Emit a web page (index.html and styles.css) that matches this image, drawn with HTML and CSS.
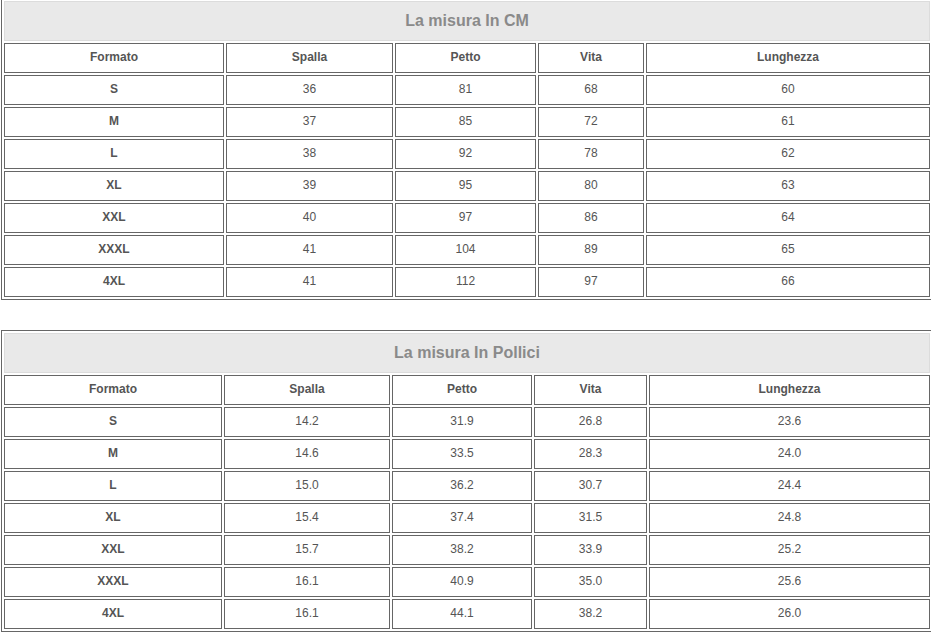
FILE: index.html
```html
<!DOCTYPE html>
<html lang="it">
<head>
<meta charset="utf-8">
<title>Tabella misure</title>
<link rel="stylesheet" href="styles.css">
</head>
<body>
<div class="page">
  <div class="chart chart-cm">
    <div class="title">La misura In CM</div>
    <div class="cell head">Formato</div><div class="cell head">Spalla</div><div class="cell head">Petto</div><div class="cell head">Vita</div><div class="cell head">Lunghezza</div>
    <div class="cell size">S</div><div class="cell">36</div><div class="cell">81</div><div class="cell">68</div><div class="cell">60</div>
    <div class="cell size">M</div><div class="cell">37</div><div class="cell">85</div><div class="cell">72</div><div class="cell">61</div>
    <div class="cell size">L</div><div class="cell">38</div><div class="cell">92</div><div class="cell">78</div><div class="cell">62</div>
    <div class="cell size">XL</div><div class="cell">39</div><div class="cell">95</div><div class="cell">80</div><div class="cell">63</div>
    <div class="cell size">XXL</div><div class="cell">40</div><div class="cell">97</div><div class="cell">86</div><div class="cell">64</div>
    <div class="cell size">XXXL</div><div class="cell">41</div><div class="cell">104</div><div class="cell">89</div><div class="cell">65</div>
    <div class="cell size">4XL</div><div class="cell">41</div><div class="cell">112</div><div class="cell">97</div><div class="cell">66</div>
  </div>
  <div class="chart chart-in">
    <div class="title">La misura In Pollici</div>
    <div class="cell head">Formato</div><div class="cell head">Spalla</div><div class="cell head">Petto</div><div class="cell head">Vita</div><div class="cell head">Lunghezza</div>
    <div class="cell size">S</div><div class="cell">14.2</div><div class="cell">31.9</div><div class="cell">26.8</div><div class="cell">23.6</div>
    <div class="cell size">M</div><div class="cell">14.6</div><div class="cell">33.5</div><div class="cell">28.3</div><div class="cell">24.0</div>
    <div class="cell size">L</div><div class="cell">15.0</div><div class="cell">36.2</div><div class="cell">30.7</div><div class="cell">24.4</div>
    <div class="cell size">XL</div><div class="cell">15.4</div><div class="cell">37.4</div><div class="cell">31.5</div><div class="cell">24.8</div>
    <div class="cell size">XXL</div><div class="cell">15.7</div><div class="cell">38.2</div><div class="cell">33.9</div><div class="cell">25.2</div>
    <div class="cell size">XXXL</div><div class="cell">16.1</div><div class="cell">40.9</div><div class="cell">35.0</div><div class="cell">25.6</div>
    <div class="cell size">4XL</div><div class="cell">16.1</div><div class="cell">44.1</div><div class="cell">38.2</div><div class="cell">26.0</div>
  </div>
</div>
</body>
</html>
```
FILE: styles.css
```css
html, body {
  margin: 0;
  padding: 0;
  background: #fff;
}
body {
  overflow: hidden;
  font-family: "Liberation Sans", Arial, sans-serif;
  color: #555;
}
.page {
  display: flex;
  flex-direction: column;
  gap: 30px;
  margin-top: -2px;
  margin-left: 1px;
}
.chart {
  display: grid;
  gap: 2px;
  padding: 2px;
  border: 1px solid #666;
  width: max-content;
  grid-template-rows: 40px;
  grid-auto-rows: 30px;
}
.chart-cm {
  grid-template-columns: 220px 167px 141px 106px 284px;
}
.chart-in {
  grid-template-columns: 218px 166px 140px 113px 281px;
}
.title {
  grid-column: 1 / -1;
  box-sizing: border-box;
  background: #e9e9e9;
  border: 1px solid #dcdcdc;
  display: flex;
  align-items: center;
  justify-content: center;
  font-size: 16px;
  font-weight: bold;
  color: #8a8a8a;
}
.cell {
  box-sizing: border-box;
  border: 1px solid #666;
  padding-bottom: 2px;
  display: flex;
  align-items: center;
  justify-content: center;
  font-size: 12px;
  color: #555;
}
.head, .size {
  font-weight: bold;
}
```
